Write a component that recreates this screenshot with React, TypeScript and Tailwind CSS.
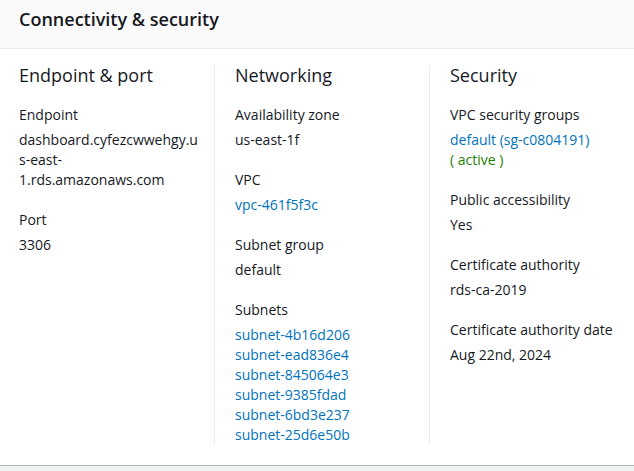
import React from "react";

const Label = ({ children }: { children: React.ReactNode }) => (
  <div className="text-[14px] leading-[20px] text-[#16191f]">{children}</div>
);

const Item = ({ label, children }: { label: string; children: React.ReactNode }) => (
  <div className="flex flex-col gap-[5px]">
    <Label>{label}</Label>
    <div className="text-[14px] leading-[20px] text-[#16191f] [overflow-wrap:break-word]">{children}</div>
  </div>
);

const Link = ({ children }: { children: React.ReactNode }) => (
  <div className="text-[#0073bb]">{children}</div>
);

const Heading = ({ children }: { children: React.ReactNode }) => (
  <div className="text-[18px] leading-[20px] text-[#16191f] mb-[20px]">{children}</div>
);

export default function App() {
  return (
    <div className="w-[634px] h-[471px] bg-[#f2f3f3] overflow-hidden" style={{ fontFamily: '"Open Sans", "Noto Sans", Arial, sans-serif' }}>
      <div className="bg-white border-b border-[#aab7b8]">
        <div className="h-[49px] bg-[#fafafa] border-b border-[#eaeded] px-[19px] flex items-center">
          <h2 className="text-[18px] font-semibold text-[#16191f] leading-[22px] -mt-[10px]">Connectivity &amp; security</h2>
        </div>
        <div className="flex pt-[16px] pb-[20px] pl-[19px]">
          <div className="w-[195px] pr-[13px] flex flex-col">
            <Heading>Endpoint &amp; port</Heading>
            <div className="flex flex-col gap-[20px]">
              <Item label="Endpoint">dashboard.cyfezcwwehgy.us-east-1.rds.amazonaws.com</Item>
              <Item label="Port">3306</Item>
            </div>
          </div>
          <div className="w-[215px] border-l border-[#eaeded] pl-[20px] pr-[20px] flex flex-col">
            <Heading>Networking</Heading>
            <div className="flex flex-col gap-[20px]">
              <Item label="Availability zone">us-east-1f</Item>
              <Item label="VPC"><Link>vpc-461f5f3c</Link></Item>
              <Item label="Subnet group">default</Item>
              <Item label="Subnets">
                <Link>subnet-4b16d206</Link>
                <Link>subnet-ead836e4</Link>
                <Link>subnet-845064e3</Link>
                <Link>subnet-9385fdad</Link>
                <Link>subnet-6bd3e237</Link>
                <Link>subnet-25d6e50b</Link>
              </Item>
            </div>
          </div>
          <div className="flex-1 border-l border-[#eaeded] pl-[20px] pr-[19px] flex flex-col">
            <Heading>Security</Heading>
            <div className="flex flex-col gap-[20px]">
              <Item label="VPC security groups">
                <Link>default (sg-c0804191)</Link>
                <div className="text-[#1d8102]">( active )</div>
              </Item>
              <Item label="Public accessibility">Yes</Item>
              <Item label="Certificate authority">rds-ca-2019</Item>
              <Item label="Certificate authority date">Aug 22nd, 2024</Item>
            </div>
          </div>
        </div>
      </div>
    </div>
  );
}
